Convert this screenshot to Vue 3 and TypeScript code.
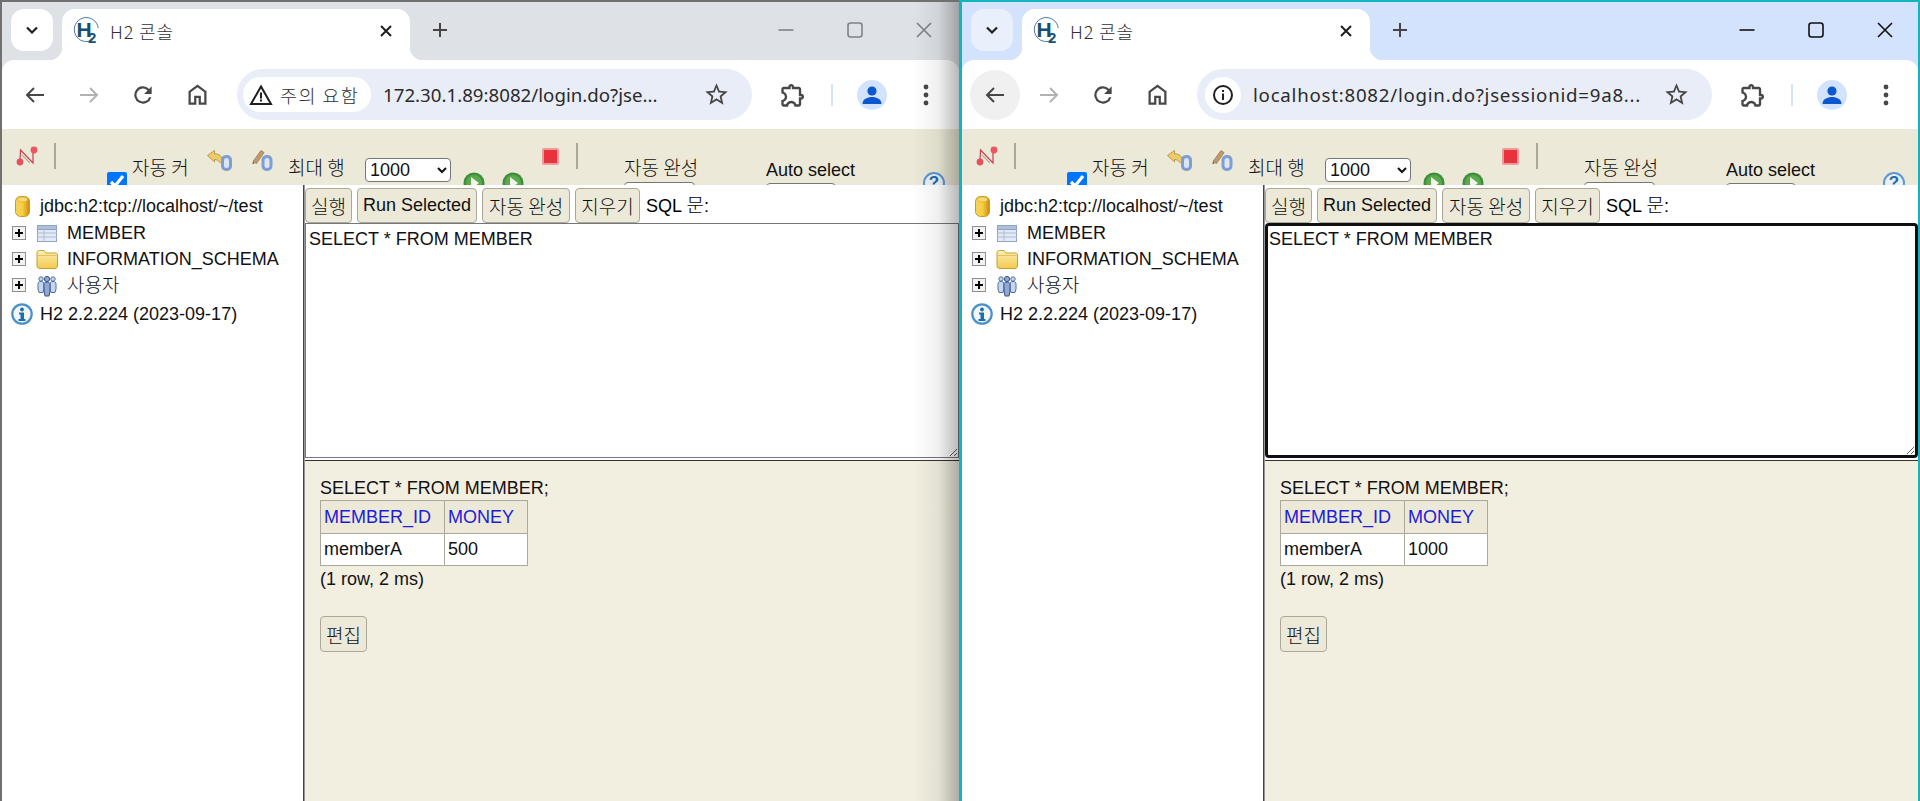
<script setup lang="ts">
interface BrowserWindow {
  id: string
  active: boolean
  insecure: boolean
  url: string
  money: string
}

const windows: BrowserWindow[] = [
  { id: 'remote', active: false, insecure: true, url: '172.30.1.89:8082/login.do?jse...', money: '500' },
  { id: 'local', active: true, insecure: false, url: 'localhost:8082/login.do?jsessionid=9a8...', money: '1000' },
]

const sql = 'SELECT * FROM MEMBER'
</script>

<template>
  <div class="screen">
    <svg class="defs" width="0" height="0" aria-hidden="true">
      <defs>
        <linearGradient id="gold" x1="0" x2="1" y1="0" y2="0">
          <stop offset="0" stop-color="#f4d264" />
          <stop offset="0.5" stop-color="#f7cf3e" />
          <stop offset="1" stop-color="#c98a12" />
        </linearGradient>
        <linearGradient id="fold" x1="0" x2="0" y1="0" y2="1">
          <stop offset="0" stop-color="#fdf0b4" />
          <stop offset="1" stop-color="#f2c94f" />
        </linearGradient>
      </defs>
    </svg>

    <section v-for="w in windows" :key="w.id" class="win" :class="w.active ? 'is-active' : 'is-idle'">
      <header class="strip">
        <div class="tabsearch">
          <svg width="16" height="16" viewBox="0 0 16 16"><path d="M3 5.5l5 5 5-5" fill="none" stroke="#1f1f1f" stroke-width="2.2" /></svg>
        </div>
        <div class="tab">
          <svg class="logo" width="25" height="25" viewBox="0 0 25 25">
            <path d="M19 21.5A12 12 0 1 1 24.200 10" fill="none" stroke="#2f6e8e" stroke-width="0.9" />
            <text x="2.500" y="18.500" class="logo-h">H</text>
            <text x="14" y="25" class="logo-2">2</text>
          </svg>
          <span class="tabtitle">H2 콘솔</span>
          <svg class="tabclose" width="14" height="14" viewBox="0 0 14 14"><path d="M2 2l10 10M12 2L2 12" stroke="#1f1f1f" stroke-width="2" /></svg>
        </div>
        <svg class="newtab" width="16" height="16" viewBox="0 0 16 16"><path d="M8 1v14M1 8h14" stroke="#444" stroke-width="2" /></svg>
        <div class="winctl">
          <svg width="16" height="16" viewBox="0 0 16 16"><path d="M0.5 8h15" stroke-width="1.6" /></svg>
          <svg width="16" height="16" viewBox="0 0 16 16"><rect x="1" y="1" width="14" height="14" rx="2.5" fill="none" stroke-width="1.6" /></svg>
          <svg width="16" height="16" viewBox="0 0 16 16"><path d="M1 1l14 14M15 1L1 15" stroke-width="1.6" /></svg>
        </div>
      </header>

      <nav class="bar">
        <div class="navbtn" :class="{ hover: w.active }">
          <svg width="24" height="24" viewBox="0 0 24 24"><path d="M21 12H4M11 5l-7 7 7 7" fill="none" stroke="#474747" stroke-width="2" /></svg>
        </div>
        <div class="navbtn">
          <svg width="24" height="24" viewBox="0 0 24 24"><path d="M3 12h17M13 5l7 7-7 7" fill="none" stroke="#b1b1b1" stroke-width="2" /></svg>
        </div>
        <div class="navbtn">
          <svg width="26" height="26" viewBox="0 0 24 24"><path fill="#474747" d="M17.65 6.35A8 8 0 1 0 19.73 14h-2.08a6 6 0 1 1-1.41-6.24L13 11h7V4z" /></svg>
        </div>
        <div class="navbtn">
          <svg width="27" height="27" viewBox="0 0 24 24"><path fill="#474747" d="M6 19h3v-6h6v6h3v-9l-6-4.5L6 10zM4 21V9l8-6 8 6v12h-7v-6h-2v6z" /></svg>
        </div>

        <div class="pill">
          <div class="chip" :class="{ round: !w.insecure }">
            <svg v-if="w.insecure" width="24" height="22" viewBox="0 0 24 22">
              <path d="M12 2.5L22 20H2z" fill="none" stroke="#1f1f1f" stroke-width="2" />
              <path d="M12 8.5v6M12 15.5v2" stroke="#1f1f1f" stroke-width="2" />
            </svg>
            <svg v-else width="22" height="22" viewBox="0 0 22 22">
              <circle cx="11" cy="11" r="9" fill="none" stroke="#1f1f1f" stroke-width="2" />
              <path d="M11 9.5v6.5M11 6v2" stroke="#1f1f1f" stroke-width="2" />
            </svg>
            <span v-if="w.insecure" class="chiptext">주의 요함</span>
          </div>
          <span class="url">{{ w.url }}</span>
          <svg class="star" width="27" height="27" viewBox="0 0 24 24"><path fill="#474747" d="M22 9.24l-7.19-.62L12 2 9.19 8.63 2 9.24l5.46 4.73L5.82 21 12 17.27 18.18 21l-1.63-7.03L22 9.24zM12 15.4l-3.76 2.27 1-4.28-3.32-2.88 4.38-.38L12 6.1l1.71 4.04 4.38.38-3.32 2.88 1 4.28L12 15.4z" /></svg>
        </div>

        <div class="navbtn ext">
          <svg width="28" height="28" viewBox="0 0 24 24"><path fill="#474747" d="M10.5 4.5c.28 0 .5.22.5.5v2h6v6h2c.28 0 .5.22.5.5s-.22.5-.5.5h-2v6h-2.12c-.68-1.75-2.39-3-4.38-3s-3.7 1.25-4.38 3H4v-2.12c1.75-.68 3-2.39 3-4.38 0-1.99-1.24-3.7-2.99-4.38L4 7h6V5c0-.28.22-.5.5-.5m0-2C9.12 2.5 8 3.62 8 5H4c-1.1 0-1.99.9-1.99 2v3.8h.29c1.49 0 2.7 1.21 2.7 2.7s-1.21 2.7-2.7 2.7H2V20c0 1.1.9 2 2 2h3.8v-.3c0-1.49 1.21-2.7 2.7-2.7 1.49 0 2.7 1.21 2.7 2.7v.3H17c1.1 0 2-.9 2-2v-4c1.38 0 2.5-1.12 2.5-2.5S20.38 11 19 11V7c0-1.1-.9-2-2-2h-4c0-1.38-1.12-2.5-2.5-2.5z" /></svg>
        </div>
        <div class="divider"></div>
        <div class="navbtn avatar">
          <svg width="30" height="30" viewBox="0 0 30 30">
            <circle cx="15" cy="15" r="15" fill="#d3e3fd" />
            <circle cx="15" cy="11" r="4.6" fill="#0b57d0" />
            <path d="M5.5 24c0-5 5-7 9.5-7s9.5 2 9.5 7z" fill="#0b57d0" />
          </svg>
        </div>
        <div class="navbtn dots">
          <svg width="6" height="22" viewBox="0 0 6 22"><circle cx="3" cy="3" r="2.4" fill="#474747" /><circle cx="3" cy="11" r="2.4" fill="#474747" /><circle cx="3" cy="19" r="2.4" fill="#474747" /></svg>
        </div>
      </nav>

      <main class="page">
        <div class="h2bar">
          <svg class="t-refresh" width="24" height="22" viewBox="0 0 24 22">
            <path d="M4 17L4.500 5 17 18V5" fill="none" stroke="#c9414c" stroke-width="1.200" />
            <path d="M6 10l8 8" fill="none" stroke="#b9b5a5" stroke-width="1.500" />
            <circle cx="4" cy="17" r="3.400" fill="#e4505b" />
            <circle cx="18" cy="5" r="3.400" fill="#ea5560" />
          </svg>
          <div class="t-sep"></div>
          <label class="t-commit">
            <input type="checkbox" class="t-check" checked />
            <span class="ko t-committext">자동 커밋</span>
          </label>
          <svg class="t-rollback" width="25" height="22" viewBox="0 0 25 22">
            <path d="M0.500 5.500L7.500 0.500v3.300c4.500 0 7.500 2.500 8.500 7.200l-2.800 1.800C11.500 10.500 9.800 9.500 7.500 9.500v2.500z" fill="#eecb68" stroke="#a98c3a" stroke-width="0.800" />
            <rect x="14" y="5" width="11" height="16" rx="5" fill="#7f9fd0" />
            <rect x="17" y="8" width="5" height="10" rx="2.500" fill="#dbe6f5" />
          </svg>
          <svg class="t-commitico" width="21" height="24" viewBox="0 0 21 24">
            <path d="M1 13.500L9 2.500l3 2-7.500 11z" fill="#c49a68" stroke="#8d6d45" stroke-width="0.700" />
            <path d="M1 14l-.5 2 2-.7z" fill="#222" />
            <rect x="9.500" y="7" width="11" height="16" rx="5" fill="#7f9fd0" />
            <rect x="12.500" y="10" width="5" height="10" rx="2.500" fill="#dbe6f5" />
          </svg>
          <span class="ko t-max">최대 행</span>
          <select class="sel t-maxsel"><option>1000</option></select>
          <svg class="t-run" width="22" height="22" viewBox="0 0 22 22">
            <circle cx="11" cy="11" r="10.500" fill="#3f8f3a" />
            <circle cx="11" cy="11" r="8" fill="#5aa94c" />
            <path d="M8 5l8 6-8 6z" fill="#f3f6ec" />
          </svg>
          <svg class="t-run2" width="22" height="22" viewBox="0 0 22 22">
            <circle cx="11" cy="11" r="10.500" fill="#3f8f3a" />
            <circle cx="11" cy="11" r="8" fill="#5aa94c" />
            <path d="M8 5l8 6-8 6z" fill="#f3f6ec" />
          </svg>
          <div class="t-stop"></div>
          <div class="t-sep t-sep2"></div>
          <div class="t-group t-auto">
            <span class="ko">자동 완성</span>
            <select class="sel t-groupsel"><option>끄기</option></select>
          </div>
          <div class="t-group t-select">
            <span class="latin">Auto select</span>
            <select class="sel t-groupsel2"><option>On</option></select>
          </div>
          <div class="t-help">?</div>
        </div>

        <div class="frames">
          <aside class="tree">
            <div class="row first">
              <svg class="i-db" width="15" height="21" viewBox="0 0 15 21">
                <rect x="0.500" y="0.500" width="14" height="20" rx="5" fill="url(#gold)" stroke="#c79a27" />
                <ellipse cx="7.500" cy="3.500" rx="5" ry="2.400" fill="#f6da74" stroke="#d4a72c" stroke-width="0.600" />
              </svg>
              <span class="label db">jdbc:h2:tcp://localhost/~/test</span>
            </div>
            <div class="row">
              <span class="plus"></span>
              <span class="slot">
                <svg width="20" height="17" viewBox="0 0 20 17">
                  <rect x="0.500" y="0.500" width="19" height="16" fill="#e4eaf4" stroke="#8fa3c4" />
                  <rect x="0.500" y="0.500" width="19" height="4" fill="#aebfdc" stroke="#8fa3c4" />
                  <path d="M0 8h20M0 12h20M7 4v13" stroke="#aebcd2" />
                </svg>
              </span>
              <span class="label">MEMBER</span>
            </div>
            <div class="row">
              <span class="plus"></span>
              <span class="slot">
                <svg width="22" height="20" viewBox="0 0 22 20">
                  <path d="M1 4c0-1.500.8-2.500 2.500-2.500h4.500l2 2.500h9.500c1.200 0 2 .8 2 2V17c0 1.500-1 2.500-2.500 2.500h-15C2 19.500 1 18.500 1 17z" fill="url(#fold)" stroke="#c99e37" />
                  <path d="M1.500 6.500h19" stroke="#e2b84a" stroke-width="0.800" />
                </svg>
              </span>
              <span class="label">INFORMATION_SCHEMA</span>
            </div>
            <div class="row">
              <span class="plus"></span>
              <span class="slot">
                <svg width="20" height="23" viewBox="0 0 20 23">
                  <g fill="#c9d7ee" stroke="#4f6fa6" stroke-width="1">
                    <circle cx="4" cy="5" r="2.200" />
                    <path d="M1 10c0-1.500 1-2.500 3-2.500s3 1 3 2.500v5l-1 3.500H2L1 15z" />
                    <circle cx="16" cy="5" r="2.200" />
                    <path d="M13 10c0-1.500 1-2.500 3-2.500s3 1 3 2.500v5l-1 3.500h-4l-1-3.500z" />
                  </g>
                  <g fill="#8fa9d4" stroke="#34508a" stroke-width="1">
                    <circle cx="10" cy="5" r="2.600" />
                    <path d="M7 10.500C7 9 8 8 10 8s3 1 3 2.500v6.500l-1 5H8l-1-5z" />
                  </g>
                </svg>
              </span>
              <span class="ko label">사용자</span>
            </div>
            <div class="row version">
              <svg class="i-info" width="22" height="22" viewBox="0 0 22 22">
                <circle cx="11" cy="11" r="9.700" fill="#f2f7fc" stroke="#4a90c8" stroke-width="2.200" />
                <circle cx="11" cy="6.500" r="1.900" fill="#1f6cab" />
                <path d="M8 9.500h5v6.500h1.500v2h-7v-2H9.500v-4.500H8z" fill="#1f6cab" />
              </svg>
              <span class="label db">H2 2.2.224 (2023-09-17)</span>
            </div>
          </aside>

          <div class="query">
            <div class="sqlbar">
              <button class="btn ko b-run" type="button">실행</button>
              <button class="btn latin" type="button">Run Selected</button>
              <button class="btn ko b-auto" type="button">자동 완성</button>
              <button class="btn ko b-clear" type="button">지우기</button>
              <span class="sqllabel"><span class="latin">SQL </span><span class="ko">문</span><span class="latin">:</span></span>
            </div>
            <textarea class="editor" :class="{ focused: w.active }" :value="sql" spellcheck="false"></textarea>
            <div class="results">
              <p class="stmt">SELECT * FROM MEMBER;</p>
              <table class="grid">
                <thead>
                  <tr><th class="c1">MEMBER_ID</th><th class="c2">MONEY</th></tr>
                </thead>
                <tbody>
                  <tr><td>memberA</td><td>{{ w.money }}</td></tr>
                </tbody>
              </table>
              <p class="meta">(1 row, 2 ms)</p>
              <button class="btn ko edit" type="button">편집</button>
            </div>
          </div>
        </div>
      </main>

      <div v-if="!w.active" class="shade"></div>
    </section>
  </div>
</template>

<style>
html, body { margin: 0; padding: 0; background: #fff; }
</style>

<style scoped>
.screen { display: flex; width: 1920px; height: 801px; overflow: hidden; position: relative; }
.defs { position: absolute; }
.win { position: relative; display: flex; flex-direction: column; height: 801px; box-sizing: border-box; overflow: hidden; }
.is-idle { width: 959px; border-left: 2px solid #707070; border-top: 2px solid #707070; --strip: #dee1e6; --search: #fff; --ctl: #7f8388; background: var(--strip); }
.is-active { width: 961px; border-left: 3px solid #13b3c0; border-top: 2px solid #13b3c0; border-right: 2px solid #13b3c0; --strip: #d3e3fd; --search: #e9f0fc; --ctl: #111; background: var(--strip); }

.strip { display: flex; align-items: flex-start; height: 58px; flex: none; position: relative; }
.tabsearch { width: 42px; height: 42px; margin: 7px 0 0 9px; border-radius: 13px; background: var(--search); display: flex; align-items: center; justify-content: center; }
.tab { position: relative; box-sizing: border-box; width: 348px; height: 51px; margin: 7px 0 0 9px; background: #fff; border-radius: 13px 13px 0 0; display: flex; align-items: center; padding: 0 0 8px 12px; }
.tab::before, .tab::after { content: ""; position: absolute; bottom: 0; width: 13px; height: 13px; }
.tab::before { left: -13px; background: radial-gradient(circle at 0 0, transparent 13px, #fff 13.5px); }
.tab::after { right: -13px; background: radial-gradient(circle at 100% 0, transparent 13px, #fff 13.5px); }
.logo { flex: none; overflow: visible; }
.logo-h { font: 700 21px "Liberation Sans", sans-serif; fill: #164f73; }
.logo-2 { font: 700 15px "Liberation Sans", sans-serif; fill: #12527a; }
.tabtitle { margin-left: 11px; font: 300 18px "Noto Sans CJK KR", sans-serif; color: #303030; flex: 1; white-space: nowrap; letter-spacing: 0.9px; }
.tabclose { margin-right: 17px; }
.newtab { margin: 20px 0 0 22px; }
.winctl { margin-left: auto; display: flex; align-items: center; gap: 53px; margin-top: 20px; padding-right: 27px; }
.winctl svg { stroke: var(--ctl); }
.is-active .winctl { padding-right: 25px; }

.bar { display: flex; align-items: center; height: 69px; flex: none; background: #fff; border-radius: 12px 12px 0 0; padding-left: 8px; box-sizing: border-box; }
.navbtn { flex: none; width: 50px; height: 50px; margin-right: 4px; border-radius: 50%; display: flex; align-items: center; justify-content: center; }
.navbtn.hover { background: #f0f0f0; }
.pill { flex: none; box-sizing: border-box; width: 515px; height: 51px; margin-left: 11px; border-radius: 26px; background: #e9edf7; display: flex; align-items: center; padding: 0 6px; }
.chip { height: 35px; width: 128px; box-sizing: border-box; border-radius: 18px; background: #fff; display: flex; align-items: center; padding-left: 6px; flex: none; }
.chip.round { width: 36px; height: 36px; padding-left: 7px; margin-left: 2px; }
.chiptext { margin-left: 7px; font: 300 18.500px "Noto Sans CJK KR", sans-serif; color: #303030; letter-spacing: 1.400px; white-space: nowrap; }
.url { margin-left: 12px; font: 400 18.700px "Noto Sans", "Noto Sans CJK KR", sans-serif; color: #2b2b2b; white-space: nowrap; flex: 1; overflow: hidden; }
.is-active .url { letter-spacing: 0.75px; }
.star { flex: none; margin-right: 16px; margin-left: 2px; }
.ext { margin-left: 16px; margin-right: 0; }
.divider { width: 2px; height: 22px; margin-left: 13px; background: #d3e3fd; flex: none; }
.avatar { margin-left: 14px; }

.page { flex: 1; display: flex; flex-direction: column; min-height: 0; background: #fff; }
.h2bar { height: 56px; flex: none; overflow: hidden; background: #ece9d8; display: flex; align-items: flex-start; font: 18px "Liberation Sans", "Noto Sans CJK KR", sans-serif; color: #111; }
.ko { font-family: "Noto Sans CJK KR", sans-serif; font-size: 19px; font-weight: 300; }
.latin { font-family: "Liberation Sans", sans-serif; font-size: 18px; }
.t-refresh { margin: 16px 0 0 14px; flex: none; }
.t-sep { width: 2px; height: 26px; margin: 14px 0 0 14px; background: #aca899; flex: none; }
.t-commit { display: flex; align-items: flex-start; margin-left: 51px; flex: none; }
.t-check { width: 20px; height: 20px; margin: 43px 0 0 0; accent-color: #0075ff; }
.t-committext { width: 60px; margin: 24px 0 0 5px; line-height: 28px; }
.t-rollback { margin: 21px 0 0 15px; flex: none; }
.t-commitico { margin: 19px 0 0 20px; flex: none; }
.t-max { margin: 24px 0 0 15px; width: 58px; flex: none; line-height: 28px; white-space: nowrap; }
.sel { box-sizing: border-box; background: #fff; border: 1px solid #767676; border-radius: 4px; color: #111; font: 18px "Liberation Sans", sans-serif; }
.t-maxsel { width: 86px; height: 24px; margin: 29px 0 0 19px; flex: none; padding: 0; }
.t-run { margin: 43px 0 0 12px; flex: none; }
.t-run2 { margin: 43px 0 0 17px; flex: none; }
.t-stop { box-sizing: border-box; width: 17px; height: 17px; margin: 19px 0 0 18px; flex: none; background: #e8323c; border: 2px solid #ee9a9a; border-radius: 2px; }
.t-sep2 { margin-left: 17px; }
.t-group { display: flex; flex-direction: column; align-items: flex-start; flex: none; }
.t-auto { margin: 24px 0 0 46px; width: 76px; white-space: nowrap; }
.t-auto .ko { line-height: 28px; }
.t-groupsel { width: 71px; height: 24px; margin-top: 1px; }
.t-select { margin: 30px 0 0 66px; width: 90px; white-space: nowrap; }
.t-select .latin { line-height: 22px; }
.t-groupsel2 { width: 70px; height: 24px; margin-top: 2px; }
.t-help { box-sizing: border-box; width: 22px; height: 22px; margin: 43px 0 0 67px; flex: none; border: 2px solid #5f97cf; border-radius: 50%; background: #e8f1fa; color: #2469a8; font: 700 17px/18px "Liberation Sans", sans-serif; text-align: center; }

.frames { flex: 1; display: grid; grid-template-columns: 302px 1fr; min-height: 0; }
.tree { box-sizing: border-box; padding-top: 8px; border-right: 1px solid #444; font: 18px "Liberation Sans", "Noto Sans CJK KR", sans-serif; color: #111; }
.row { display: flex; align-items: center; height: 26px; padding-left: 10px; white-space: nowrap; }
.row.first { margin-bottom: 1px; padding-left: 13px; }
.row.version { margin-top: 3px; padding-left: 9px; }
.row .ko { margin-top: -3px; }
.plus { box-sizing: border-box; width: 14px; height: 14px; border: 1px solid #8e8e8e; background: linear-gradient(#000, #000) center / 8px 2px no-repeat, linear-gradient(#000, #000) center / 2px 8px no-repeat, #f2f2f2; flex: none; }
.slot { width: 24px; margin-left: 9px; display: flex; justify-content: center; flex: none; }
.label { margin-left: 8px; }
.db { margin-left: 10px; }
.i-db, .i-info { flex: none; }
.i-info + .db { margin-left: 7px; }

.query { display: flex; flex-direction: column; min-height: 0; border-left: 1px solid #999; }
.sqlbar { display: flex; align-items: center; height: 38px; padding-top: 3px; box-sizing: border-box; flex: none; }
.btn { box-sizing: border-box; height: 35px; padding: 0 5px; margin: 0 5px 0 0; background: #ece9d8; border: 1px solid #aca899; border-radius: 4px; color: #111; white-space: nowrap; flex: none; }
.b-run { width: 47px; padding: 0; }
.b-auto { width: 88px; padding: 0; }
.b-clear { width: 65px; padding: 0; }
.sqllabel { margin: 0 0 4px 1px; white-space: nowrap; }
.editor { display: block; box-sizing: border-box; width: 100%; height: 235px; flex: none; margin: 0; padding: 4px 3px; border: 1px solid #767676; outline: none; background: #fff; color: #111; font: 18px/22px "Liberation Sans", sans-serif; }
.editor.focused { border: 3px solid #101010; border-radius: 4px; padding: 2px 1px; }
.results { flex: 1; margin-top: 2px; border-top: 1px solid #333; background: #f2efe1; padding: 15px 0 0 15px; font: 18px "Liberation Sans", sans-serif; color: #111; }
.stmt { margin: 0; font-size: 18px; line-height: 24px; }
.grid { border-collapse: collapse; font-size: 18px; }
.grid th, .grid td { border: 1px solid #aca899; padding: 0 3px; text-align: left; font-weight: 400; background: #fff; }
.grid th { height: 32px; background: #ece9d8; color: #1d1dd8; }
.grid td { height: 31px; }
.c1 { width: 117px; }
.c2 { width: 76px; }
.meta { margin: 1px 0 0; line-height: 24px; }
.edit { display: block; margin-top: 25px; height: 36px; width: 47px; padding: 0; }

.shade { position: absolute; top: 0; right: 0; bottom: 0; width: 46px; background: linear-gradient(90deg, rgba(0, 0, 0, 0), rgba(0, 0, 0, 0.06) 55%, rgba(0, 0, 0, 0.28)); pointer-events: none; }
</style>
